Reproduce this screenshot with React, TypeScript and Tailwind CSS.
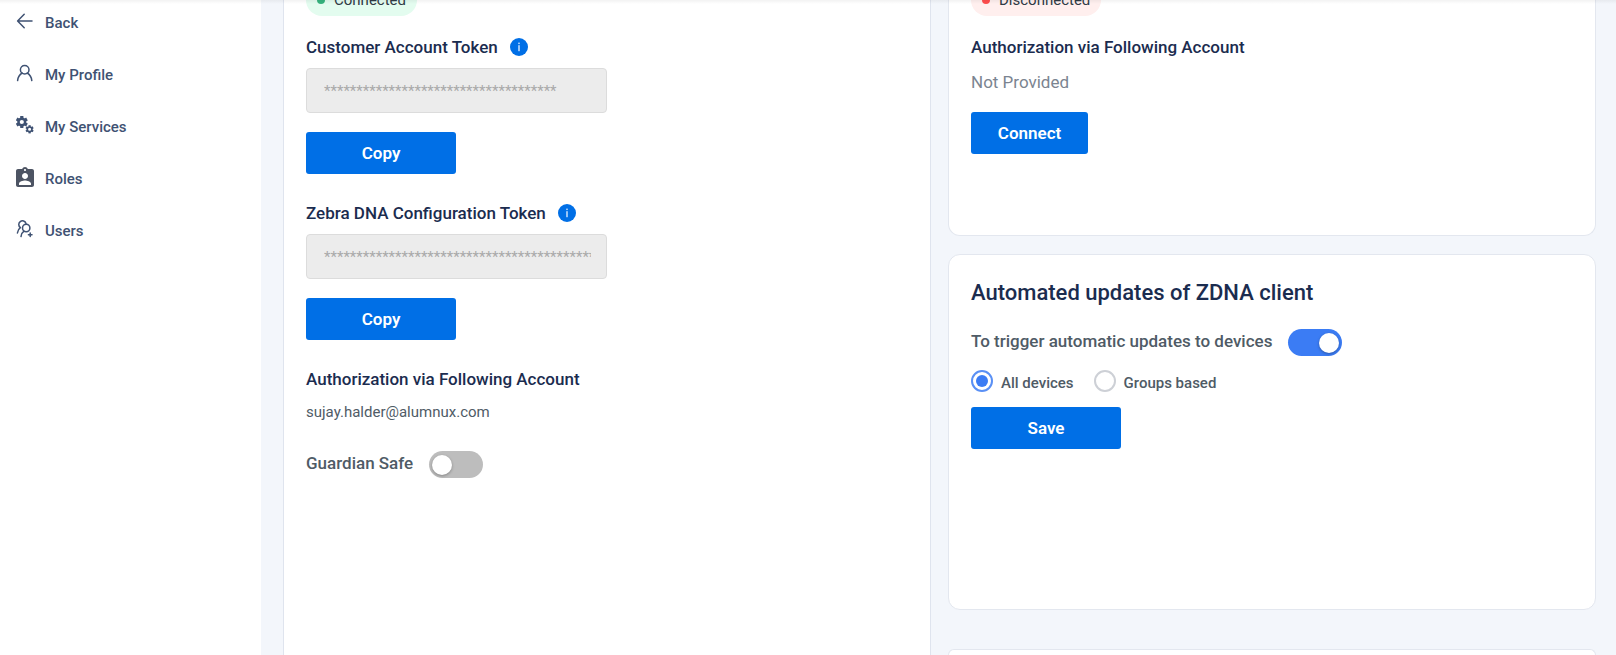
import type { ReactNode } from "react";
import { MdAssignmentInd } from "react-icons/md";

const TEETH = [0, 60, 120, 180, 240, 300];

function Gear({ cx, cy, r, hole, width }: { cx: number; cy: number; r: number; hole: number; width: number }) {
  const body = r * 0.76;
  return (
    <g stroke="currentColor" fill="none">
      <circle cx={cx} cy={cy} r={(body + hole) / 2} strokeWidth={body - hole} />
      {TEETH.map((a) => (
        <line
          key={a}
          x1={cx}
          y1={cy - body + 1}
          x2={cx}
          y2={cy - r}
          strokeWidth={width}
          transform={`rotate(${a} ${cx} ${cy})`}
        />
      ))}
    </g>
  );
}

const strokeProps = {
  fill: "none",
  stroke: "currentColor",
  strokeWidth: 1.5,
  strokeLinecap: "round" as const,
  strokeLinejoin: "round" as const,
};

const BackIcon = () => (
  <svg viewBox="0 0 18 18" className="size-[18px]" {...strokeProps}>
    <path d="M16 9H2M8.2 2.2 1.6 9l6.6 6.8" />
  </svg>
);

const ProfileIcon = () => (
  <svg viewBox="0 0 18 18" className="size-[18px]" {...strokeProps}>
    <circle cx="8.7" cy="5.8" r="4.3" />
    <path d="M1.6 16.6c.3-3.3 1.9-5.9 4.6-7.6M15.8 16.6c-.3-3.3-1.9-5.9-4.6-7.6" />
  </svg>
);

const ServicesIcon = () => (
  <svg viewBox="0 0 18 18" className="size-[18px]">
    <Gear cx={5.8} cy={6} r={6} hole={2.1} width={3.2} />
    <Gear cx={13.6} cy={13.3} r={4.1} hole={1.5} width={2.2} />
  </svg>
);

const UsersIcon = () => (
  <svg viewBox="0 0 18 18" className="size-[18px]" {...strokeProps}>
    <path d="M10 3.4A3.7 3.7 0 1 0 4.4 7.6C2.6 8.8 1.6 10.6 1.4 13" />
    <circle cx="10.2" cy="8" r="3.7" />
    <path d="M5 16.6c.2-2.500 1.200-4.200 3-5.400" />
    <path d="M14.200 13v3.600M12.400 14.800h3.600" />
  </svg>
);

const navItems: { label: string; icon: ReactNode }[] = [
  { label: "Back", icon: <BackIcon /> },
  { label: "My Profile", icon: <ProfileIcon /> },
  { label: "My Services", icon: <ServicesIcon /> },
  { label: "Roles", icon: <MdAssignmentInd className="-mx-[3px] -mt-0.5 size-6 text-[#4d5463]" /> },
  { label: "Users", icon: <UsersIcon /> },
];

function PrimaryButton({ children, wide = true }: { children: ReactNode; wide?: boolean }) {
  return (
    <button
      type="button"
      className={`block h-[42px] rounded-[3px] bg-[#006fe6] pt-0.5 text-[17px] font-semibold text-white ${wide ? "w-[150px]" : "w-[117px]"}`}
    >
      {children}
    </button>
  );
}

function InfoIcon() {
  return (
    <svg viewBox="0 0 18 18" className="size-[18px]" aria-hidden="true">
      <circle cx="9" cy="9" r="9" fill="#006fe6" />
      <rect x="8.3" y="7.2" width="1.4" height="6" fill="#d9eaff" />
      <rect x="8.3" y="4.6" width="1.4" height="1.5" fill="#d9eaff" />
    </svg>
  );
}

function TokenField({ id, label, value }: { id: string; label: string; value: string }) {
  return (
    <div className="mb-[25px]">
      <div className="flex h-7 items-center gap-3">
        <label htmlFor={id} className="text-[17px]/7 font-medium text-[#1b2c4f]">
          {label}
        </label>
        <InfoIcon />
      </div>
      <input
        id={id}
        type="text"
        disabled
        value={value}
        readOnly
        className="mt-[7px] mb-[19px] block h-[45px] w-[301px] rounded-[4px] border border-[#dcdcdc] bg-[#ececec] pr-[15px] pl-[17px] text-[15px] text-[#a9a9a9]"
      />
      <PrimaryButton>Copy</PrimaryButton>
    </div>
  );
}

function Toggle({ id, on = false }: { id: string; on?: boolean }) {
  return (
    <input
      id={id}
      type="checkbox"
      role="switch"
      defaultChecked={on}
      className="flex h-[27px] w-[54px] shrink-0 appearance-none items-center rounded-full bg-[#bdbdbd] px-[3px] before:size-5 before:rounded-full before:bg-white before:shadow-[0_1px_3px_rgba(0,0,0,0.3)] checked:justify-end checked:bg-[#3b7cf4]"
    />
  );
}

function RadioOption({ id, label, checked = false }: { id: string; label: string; checked?: boolean }) {
  return (
    <div className="flex items-start gap-2">
      <input
        id={id}
        type="radio"
        name="update-scope"
        defaultChecked={checked}
        className="grid size-[22px] appearance-none place-items-center rounded-full border-2 border-[#cdd0d6] checked:border-[#5a90f5] checked:before:size-3 checked:before:rounded-full checked:before:bg-[#3b7cf4]"
      />
      <label htmlFor={id} className="pt-px text-[15px]/6 font-medium text-[#4f5b66]">
        {label}
      </label>
    </div>
  );
}

function StatusPill({ ok, label }: { ok: boolean; label: string }) {
  return (
    <div
      className={`-mt-4 mb-[17px] flex h-8 w-fit items-center gap-[9px] rounded-full px-[11px] text-[15px] text-[#2f3a45] ${ok ? "bg-[#e3fcef]" : "bg-[#ffefee]"}`}
    >
      <span className={`size-2 rounded-full ${ok ? "bg-[#36b37e]" : "bg-[#ff4d4d]"}`} />
      {label}
    </div>
  );
}

export default function App() {
  return (
    <div className="relative flex h-screen overflow-hidden bg-[#f3f6fb] font-[Roboto,sans-serif]">
      <div className="pointer-events-none absolute inset-x-0 top-0 h-1 bg-linear-to-b from-black/5 to-transparent" />

      <nav className="w-[261px] shrink-0 bg-white px-4 pt-3">
        <ul className="flex flex-col gap-7">
          {navItems.map((item) => (
            <li key={item.label}>
              <a href="#" className="flex h-6 items-start gap-[11px] text-[15px]/[22px] font-medium text-[#3f5273]">
                {item.icon}
                {item.label}
              </a>
            </li>
          ))}
        </ul>
      </nav>

      <main className="grid flex-1 grid-cols-2 gap-[17px] pr-5 pl-[22px]">
        <section className="border-x border-[#dfe4ee] bg-white px-[22px]">
          <StatusPill ok label="Connected" />
          <TokenField id="account-token" label="Customer Account Token" value={"*".repeat(36)} />
          <TokenField id="zdna-token" label="Zebra DNA Configuration Token" value={"*".repeat(48)} />
          <h3 className="text-[17px]/7 font-medium text-[#1b2c4f]">Authorization via Following Account</h3>
          <p className="mt-[7px] text-[15px]/6 text-[#4f5b66]">sujay.halder@alumnux.com</p>
          <div className="mt-[27px] flex items-start gap-4">
            <label htmlFor="guardian-safe" className="text-[17px]/6 font-medium text-[#4f5b66]">
              Guardian Safe
            </label>
            <Toggle id="guardian-safe" />
          </div>
        </section>

        <div className="flex flex-col">
          <section className="rounded-b-xl border border-t-0 border-[#e3e7ef] bg-white px-[22px] pb-[81px]">
            <StatusPill ok={false} label="Disconnected" />
            <h3 className="text-[17px]/7 font-medium text-[#1b2c4f]">Authorization via Following Account</h3>
            <p className="mt-[7px] mb-4 text-[17px]/7 text-[#7b8490]">Not Provided</p>
            <PrimaryButton wide={false}>Connect</PrimaryButton>
          </section>

          <section className="mt-[18px] rounded-xl border border-[#e3e7ef] bg-white px-[22px] pt-6 pb-[160px]">
            <h2 className="text-[22px]/7 font-medium text-[#1b2c4f]">Automated updates of ZDNA client</h2>
            <div className="mt-[22px] flex items-start gap-4">
              <label htmlFor="auto-updates" className="text-[17px]/6 font-medium text-[#4f5b66]">
                To trigger automatic updates to devices
              </label>
              <Toggle id="auto-updates" on />
            </div>
            <div className="mt-[14px] mb-3 flex gap-5">
              <RadioOption id="scope-all" label="All devices" checked />
              <RadioOption id="scope-groups" label="Groups based" />
            </div>
            <PrimaryButton>Save</PrimaryButton>
          </section>

          <section className="mt-[39px] flex-1 rounded-t-xl border border-b-0 border-[#e3e7ef] bg-white" />
        </div>
      </main>
    </div>
  );
}
